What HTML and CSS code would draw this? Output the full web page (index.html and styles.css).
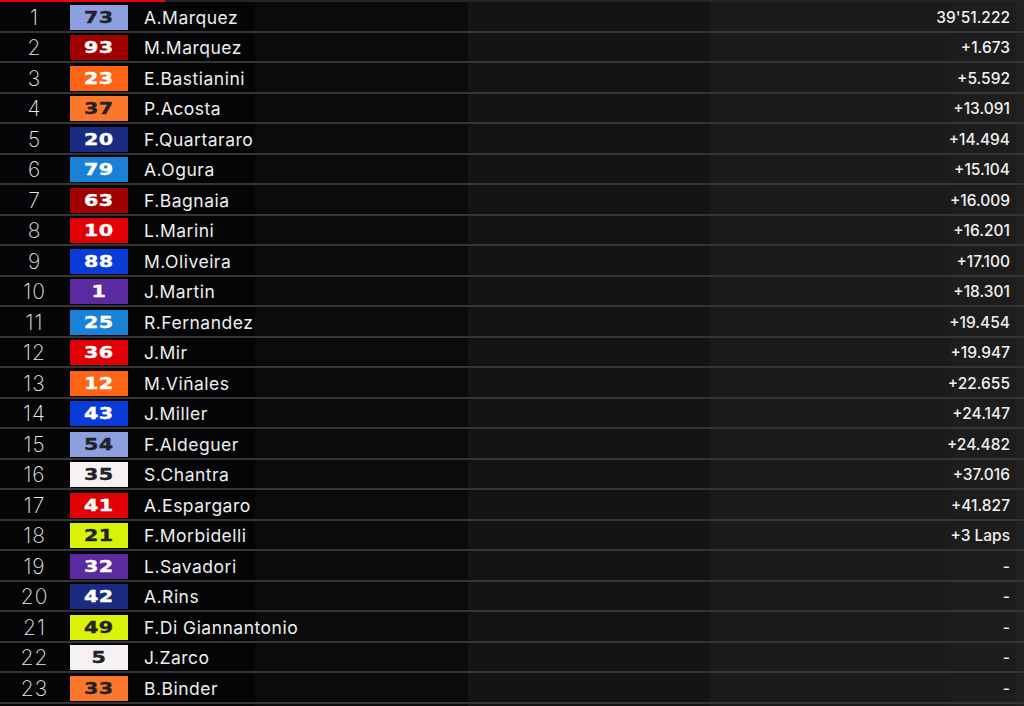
FILE: index.html
```html
<!DOCTYPE html>
<html>
<head>
<meta charset="utf-8">
<link rel="stylesheet" href="styles.css">
</head>
<body>
<div class="progress"><div class="progress-fill"></div></div>
<div class="results">
  <div class="row"><span class="pos">1</span><span class="num c-peri dark"><b>73</b></span><span class="name">A.Marquez</span><span class="gap">39'51.222</span></div>
  <div class="row"><span class="pos">2</span><span class="num c-maroon"><b>93</b></span><span class="name">M.Marquez</span><span class="gap">+1.673</span></div>
  <div class="row"><span class="pos">3</span><span class="num c-orange"><b>23</b></span><span class="name">E.Bastianini</span><span class="gap">+5.592</span></div>
  <div class="row"><span class="pos">4</span><span class="num c-ktm dark"><b>37</b></span><span class="name">P.Acosta</span><span class="gap">+13.091</span></div>
  <div class="row"><span class="pos">5</span><span class="num c-navy"><b>20</b></span><span class="name">F.Quartararo</span><span class="gap">+14.494</span></div>
  <div class="row"><span class="pos">6</span><span class="num c-sky"><b>79</b></span><span class="name">A.Ogura</span><span class="gap">+15.104</span></div>
  <div class="row"><span class="pos">7</span><span class="num c-maroon"><b>63</b></span><span class="name">F.Bagnaia</span><span class="gap">+16.009</span></div>
  <div class="row"><span class="pos">8</span><span class="num c-red"><b>10</b></span><span class="name">L.Marini</span><span class="gap">+16.201</span></div>
  <div class="row"><span class="pos">9</span><span class="num c-blue"><b>88</b></span><span class="name">M.Oliveira</span><span class="gap">+17.100</span></div>
  <div class="row"><span class="pos">10</span><span class="num c-purple"><b>1</b></span><span class="name">J.Martin</span><span class="gap">+18.301</span></div>
  <div class="row"><span class="pos">11</span><span class="num c-sky"><b>25</b></span><span class="name">R.Fernandez</span><span class="gap">+19.454</span></div>
  <div class="row"><span class="pos">12</span><span class="num c-red"><b>36</b></span><span class="name">J.Mir</span><span class="gap">+19.947</span></div>
  <div class="row"><span class="pos">13</span><span class="num c-orange"><b>12</b></span><span class="name">M.Viñales</span><span class="gap">+22.655</span></div>
  <div class="row"><span class="pos">14</span><span class="num c-blue"><b>43</b></span><span class="name">J.Miller</span><span class="gap">+24.147</span></div>
  <div class="row"><span class="pos">15</span><span class="num c-peri dark"><b>54</b></span><span class="name">F.Aldeguer</span><span class="gap">+24.482</span></div>
  <div class="row"><span class="pos">16</span><span class="num c-white dark"><b>35</b></span><span class="name">S.Chantra</span><span class="gap">+37.016</span></div>
  <div class="row"><span class="pos">17</span><span class="num c-red"><b>41</b></span><span class="name">A.Espargaro</span><span class="gap">+41.827</span></div>
  <div class="row"><span class="pos">18</span><span class="num c-lime dark"><b>21</b></span><span class="name">F.Morbidelli</span><span class="gap">+3 Laps</span></div>
  <div class="row"><span class="pos">19</span><span class="num c-purple"><b>32</b></span><span class="name">L.Savadori</span><span class="gap">-</span></div>
  <div class="row"><span class="pos">20</span><span class="num c-navy"><b>42</b></span><span class="name">A.Rins</span><span class="gap">-</span></div>
  <div class="row"><span class="pos">21</span><span class="num c-lime dark"><b>49</b></span><span class="name">F.Di Giannantonio</span><span class="gap">-</span></div>
  <div class="row"><span class="pos">22</span><span class="num c-white dark"><b>5</b></span><span class="name">J.Zarco</span><span class="gap">-</span></div>
  <div class="row"><span class="pos">23</span><span class="num c-ktm dark"><b>33</b></span><span class="name">B.Binder</span><span class="gap">-</span></div>
</div>
</body>
</html>
```
FILE: styles.css
```css
html, body {
  margin: 0;
  padding: 0;
}
body {
  width: 1024px;
  height: 706px;
  overflow: hidden;
  background: linear-gradient(to right,
    #050507 0px, #050507 255px,
    #0b0b0b 255px, #0b0b0b 468px,
    #141414 468px, #141414 710px,
    #1b1b1b 710px, #1b1b1b 950px,
    #1d1d1d 950px, #1d1d1d 1016px,
    #222222 1016px, #222222 1024px);
  color: #f0f0f0;
  font-family: "Inter", "DejaVu Sans", sans-serif;
}
.progress {
  height: 2px;
  background: #242424;
}
.progress-fill {
  width: 165px;
  height: 2px;
  background: #e8000b;
}
.results {
  display: flex;
  flex-direction: column;
}
.row {
  box-sizing: border-box;
  height: 30.5px;
  padding-top: 2px;
  border-bottom: 2px solid #353535;
  display: grid;
  grid-template-columns: 70px 58px 1fr auto;
  align-items: center;
}
.pos {
  text-align: center;
  font-family: "Inter", sans-serif;
  font-weight: 200;
  font-size: 21px;
  letter-spacing: 1px;
  color: #e8e8e8;
  padding-right: 1px;
}
.num {
  height: 25px;
  display: flex;
  align-items: center;
  justify-content: center;
  color: #ffffff;
}
.num b {
  display: inline-block;
  font-family: "DejaVu Sans", sans-serif;
  font-weight: bold;
  font-size: 16.5px;
  letter-spacing: 0.3px;
  -webkit-text-stroke: 0.4px currentColor;
  transform: scaleX(1.25);
}
.num.dark { color: #222226; }
.name {
  padding-left: 16px;
  font-family: "Inter", sans-serif;
  font-size: 17.5px;
  letter-spacing: 0.5px;
  font-weight: 400;
  color: #eeeeee;
  white-space: nowrap;
}
.gap {
  padding-right: 14px;
  font-family: "Inter", sans-serif;
  font-size: 15.5px;
  font-weight: 500;
  color: #f0f0f0;
  text-align: right;
}
.c-peri { background: #8e9fdf; }
.c-maroon { background: #a00000; }
.c-orange { background: #ff6414; }
.c-ktm { background: #fa772c; }
.c-navy { background: #1b2b82; }
.c-sky { background: #1a82d6; }
.c-red { background: #e00005; }
.c-blue { background: #0b3bd6; }
.c-purple { background: #5a2a9e; }
.c-white { background: #f6f2f3; }
.c-lime { background: #d9f20a; }
```
